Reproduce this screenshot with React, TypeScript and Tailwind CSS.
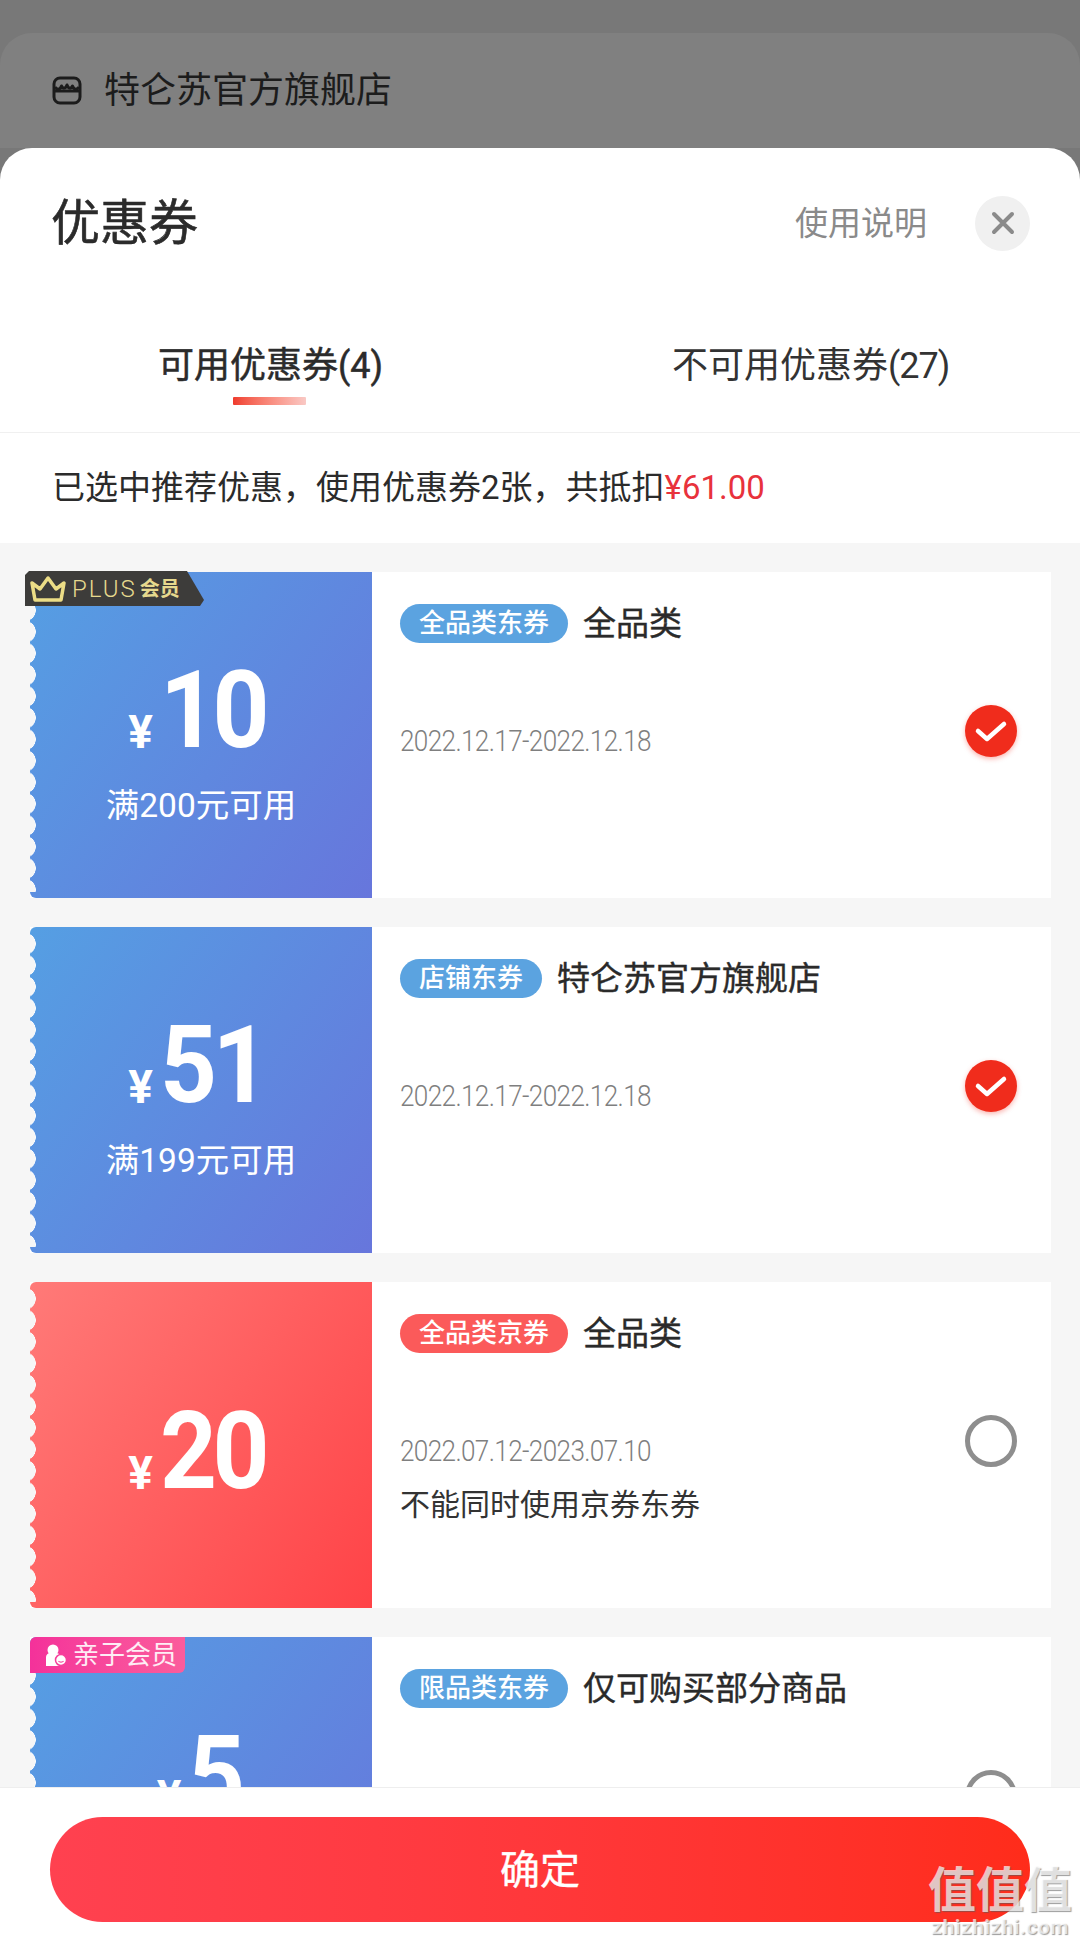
import React from 'react';

const sans = 'font-["Roboto","Noto_Sans_CJK_SC",sans-serif]';

function StoreIcon() {
  return (
    <svg width="30" height="30" viewBox="0 0 30 30" fill="none" stroke="#1c1c1c" strokeWidth="3" strokeLinejoin="round">
      <rect x="2" y="3" width="26" height="25" rx="6" />
      <path d="M2 16h26" />
      <path d="M3 12c2 3 5 3 6.500-1 1.500 3 4 3 5.500-1 1.500 4 4 4 5.500 1 1.500 4 4.500 4 6.500 1" />
    </svg>
  );
}

function CrownIcon() {
  return (
    <svg width="36" height="26" viewBox="0 0 36 26" fill="none" stroke="#ecdd86" strokeWidth="3.500" strokeLinejoin="round">
      <path d="M2 7l8 6 8-11 8 11 8-6-3 17H5z" />
    </svg>
  );
}

function FamilyIcon() {
  return (
    <svg width="22" height="22" viewBox="0 0 22 22" fill="#fff">
      <circle cx="8" cy="6" r="5.500" />
      <path d="M1 22V13c0-2 2-4 4-4h6c2 0 4 1 4 3v10z" />
      <circle cx="16" cy="16" r="5.500" stroke="#f73f9b" strokeWidth="1.500" />
      <path d="M13.500 17c1 1.500 4 1.500 5 0" fill="none" stroke="#f73f9b" strokeWidth="1.200" />
    </svg>
  );
}

function PlusBadge() {
  return (
    <div className="absolute top-[-1px] left-[-5px] z-10 flex h-[35px] w-[179px] items-center bg-[#3d3c3a] pl-[5px] [clip-path:polygon(0_4px,4px_0,162px_0,179px_29px,175px_35px,0_35px)]">
      <CrownIcon />
      <span className="ml-[6px] text-[24px] leading-none font-light tracking-[2px] text-[#e6d98e]">PLUS</span>
      <span className="ml-[3px] text-[20px] leading-none font-bold text-[#e6d98e]">会员</span>
    </div>
  );
}

function FamilyBadge() {
  return (
    <div className="absolute top-0 left-0 z-10 flex h-[36px] w-[155px] items-center gap-[6px] rounded-tl-[6px] rounded-br-[6px] bg-gradient-to-r from-[#f4319a] to-[#fb5c9c] pl-[15px]">
      <FamilyIcon />
      <span className="text-[26px] leading-none text-[#fff]/90">亲子会员</span>
    </div>
  );
}

type Coupon = {
  amount: string;
  limit?: string;
  tag: string;
  title: string;
  date?: string;
  note?: string;
  red?: boolean;
  checked?: boolean;
  badge?: 'plus' | 'family';
};

const coupons: Coupon[] = [
  { amount: '10', limit: '满200元可用', tag: '全品类东券', title: '全品类', date: '2022.12.17-2022.12.18', checked: true, badge: 'plus' },
  { amount: '51', limit: '满199元可用', tag: '店铺东券', title: '特仑苏官方旗舰店', date: '2022.12.17-2022.12.18', checked: true },
  { amount: '20', tag: '全品类京券', title: '全品类', date: '2022.07.12-2023.07.10', note: '不能同时使用京券东券', red: true },
  { amount: '5', tag: '限品类东券', title: '仅可购买部分商品', badge: 'family' },
];

function CouponCard({ coupon }: { coupon: Coupon }) {
  return (
    <div className="flex h-[326px] w-[1021px] shrink-0 bg-white">
      <div
        className={`relative flex w-[342px] shrink-0 flex-col items-center rounded-l-[6px] text-white ${
          coupon.red
            ? 'bg-[linear-gradient(125deg,#ff7a78,#ff4347)]'
            : 'bg-[linear-gradient(125deg,#559fe3,#6776dc)]'
        }`}
      >
        <div className="absolute inset-y-[6px] left-0 w-[6px] bg-[radial-gradient(circle_at_-5px_50%,#f6f6f6_10px,#fbfdff_10.500px,transparent_11px)] bg-[length:6px_21.500px]" />
        {coupon.badge === 'plus' && <PlusBadge />}
        {coupon.badge === 'family' && <FamilyBadge />}
        <div className={`flex h-[92px] items-end pr-[8px] leading-none ${coupon.red ? 'mt-[123px]' : 'mt-[92px]'}`}>
          <span className="mr-[7px] mb-[1px] text-[46px] font-bold">¥</span>
          <span className="mr-[-8px] inline-block origin-left scale-x-[0.92] text-[108px] leading-[92px] font-bold tracking-[-5px]">
            {coupon.amount}
          </span>
        </div>
        {coupon.limit && <div className="mt-[30px] text-[33.500px] leading-[40px]">{coupon.limit}</div>}
      </div>
      <div className="relative min-w-0 flex-1 pt-[32px] pl-[28px]">
        <div className="flex items-center">
          <span
            className={`flex h-[39px] items-center rounded-full px-[19px] text-[26px] font-medium text-white ${
              coupon.red ? 'bg-[#fb5a5a]' : 'bg-[#5ba3e0]'
            }`}
          >
            {coupon.tag}
          </span>
          <span className="ml-[15px] text-[33px] leading-[39px] text-[#2a2a2a] [-webkit-text-stroke:0.4px_#2a2a2a]">{coupon.title}</span>
        </div>
        {coupon.date && (
          <div className="mt-[80px] origin-left scale-x-[0.9] text-[29px] leading-[36px] font-light tracking-[-0.7px] whitespace-nowrap text-[#7f7f7f]">
            {coupon.date}
          </div>
        )}
        {coupon.note && <div className="mt-[17px] text-[30px] leading-[38px] text-[#333]">{coupon.note}</div>}
        <div className="absolute top-[133px] right-[34px]">
          {coupon.checked ? (
            <div className="flex h-[52px] w-[52px] items-center justify-center rounded-full bg-[#f02c1c] shadow-[0_2px_5px_rgba(240,44,28,0.35)]">
              <svg width="34" height="26" viewBox="0 0 34 26" fill="none" stroke="#fff" strokeWidth="4.500" strokeLinecap="round" strokeLinejoin="round">
                <path d="M4 13l9 8L30 6" />
              </svg>
            </div>
          ) : (
            <div className="h-[52px] w-[52px] rounded-full border-[5px] border-[#8e8e8e]" />
          )}
        </div>
      </div>
    </div>
  );
}

export default function App() {
  return (
    <div className={`relative flex h-[1948px] w-[1080px] flex-col overflow-hidden bg-[#787878] ${sans}`}>
      {/* dimmed page behind the sheet */}
      <div className="h-[33px] shrink-0" />
      <div className="flex h-[115px] shrink-0 items-start gap-[22px] rounded-t-[32px] bg-[#808080] pt-[35px] pl-[52px]">
        <div className="mt-[7px]">
          <StoreIcon />
        </div>
        <span className="text-[36px] leading-[46px] text-[#1c1c1c]">特仑苏官方旗舰店</span>
      </div>

      <div className="flex min-h-0 flex-1 flex-col overflow-hidden rounded-t-[32px] bg-white">
        <div className="flex h-[112px] shrink-0 items-center pt-[38px] pr-[50px] pl-[51px]">
          <span className="text-[49px] leading-none text-[#2b2b2b] [-webkit-text-stroke:0.6px_#2b2b2b]">优惠券</span>
          <span className="mr-[48px] ml-auto text-[33px] leading-none text-[#8a8a8a]">使用说明</span>
          <div className="flex h-[55px] w-[55px] items-center justify-center rounded-full bg-[#f0f0f0]">
            <svg width="24" height="24" viewBox="0 0 24 24" stroke="#8a8a8a" strokeWidth="4" strokeLinecap="round">
              <path d="M3 3l18 18M21 3L3 21" />
            </svg>
          </div>
        </div>

        <div className="relative flex h-[173px] shrink-0 items-center border-b border-[#f0f0f0] pt-[40px]">
          <div className="relative w-[540px] pl-[158px] text-[36px] leading-none text-[#2b2b2b] [-webkit-text-stroke:0.5px_#2b2b2b]">
            可用优惠券(4)
            <div className="absolute top-[49px] left-[233px] h-[8px] w-[73px] rounded-[1px] bg-gradient-to-r from-[#ef3a2d] to-[#f9c9c5]" />
          </div>
          <div className="w-[540px] pl-[132px] text-[36px] leading-none text-[#333]">
            不可用优惠券<span className="tracking-[-1px]">(27)</span>
          </div>
        </div>

        <div className="flex h-[110px] shrink-0 items-center pl-[52px] text-[33px] text-[#2b2b2b]">
          已选中推荐优惠，使用优惠券2张，共抵扣<span className="text-[#e8323c]">¥61.00</span>
        </div>

        <div className="flex min-h-0 flex-1 flex-col gap-[29px] overflow-hidden bg-[#f6f6f6] pt-[29px] pl-[30px]">
          {coupons.map((c) => (
            <CouponCard key={c.amount} coupon={c} />
          ))}
        </div>

        <div className="h-[161px] shrink-0 border-t border-[#eee] bg-white px-[50px] pt-[29px]">
          <div className="flex h-[105px] items-center justify-center rounded-full bg-gradient-to-r from-[#ff4150] to-[#ff2c1a] pt-[3px] text-[40px] text-white [-webkit-text-stroke:0.4px_#fff]">
            确定
          </div>
        </div>
      </div>

      {/* watermark */}
      <div className="absolute right-[8px] bottom-[10px] flex w-[144px] flex-col items-center text-white/70 [text-shadow:1px_1px_1px_rgba(90,90,90,0.6)]">
        <span className="text-[48px] leading-[50px] font-bold">值值值</span>
        <span className="text-[21px] leading-[22px] font-bold tracking-[0.5px]">zhizhizhi.com</span>
      </div>
    </div>
  );
}
